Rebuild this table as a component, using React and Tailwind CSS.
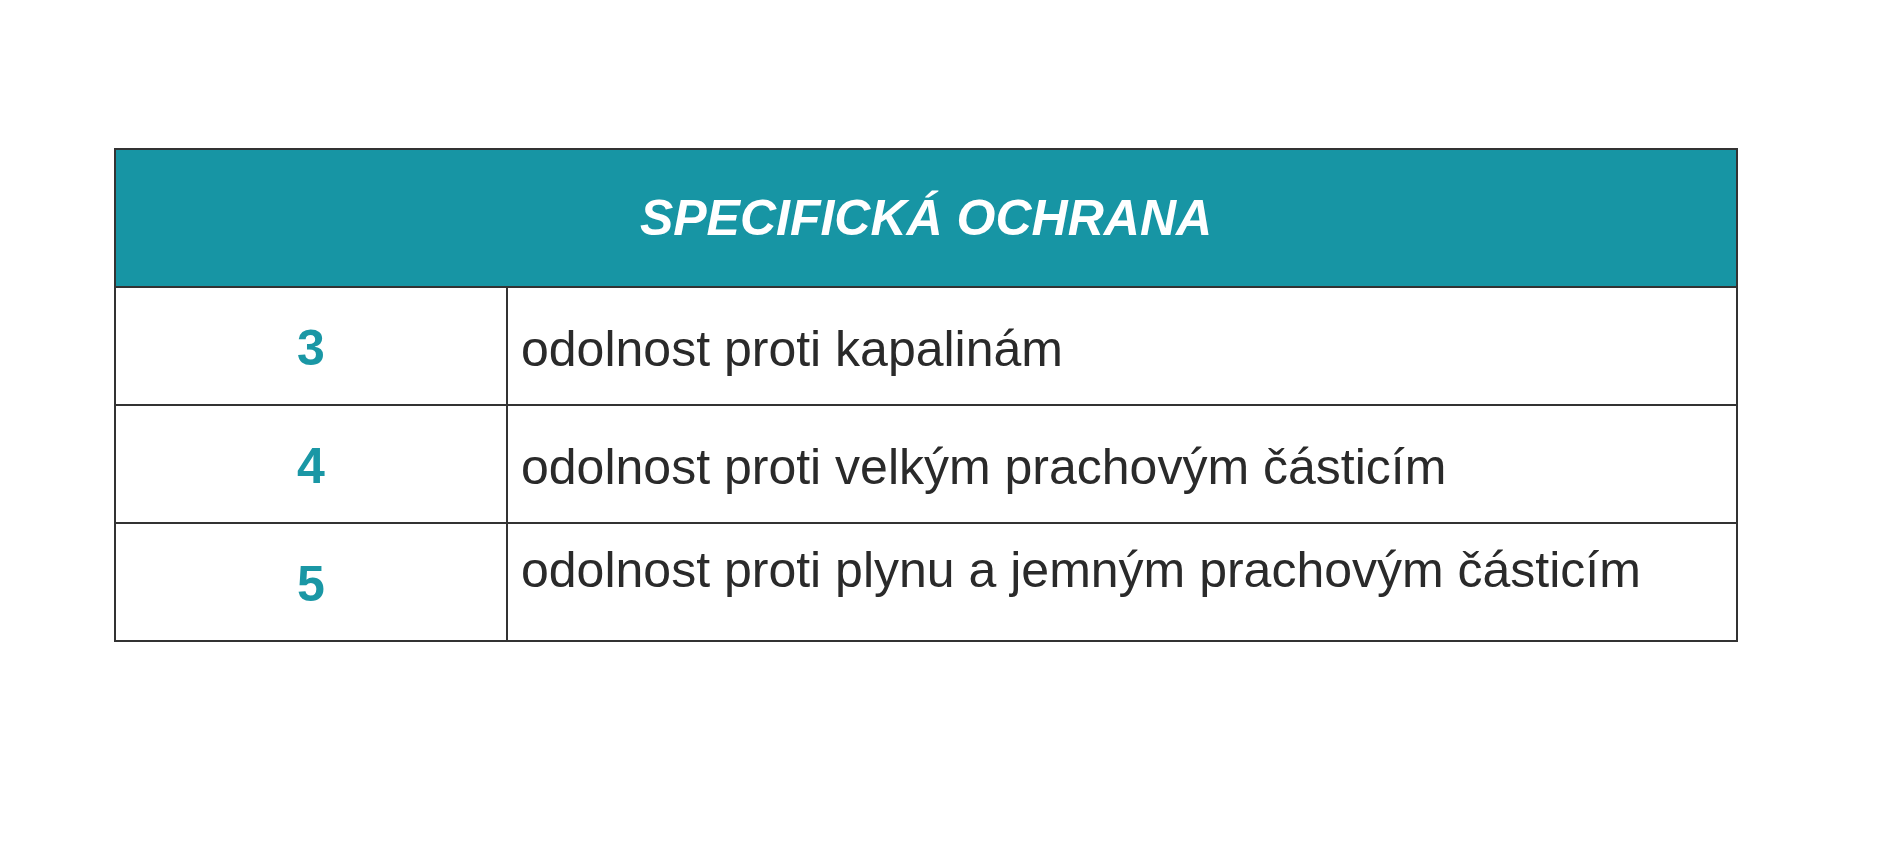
import React from "react";

const rows = [
  { num: "3", text: "odolnost proti kapalinám", align: "center" },
  { num: "4", text: "odolnost proti velkým prachovým částicím", align: "center" },
  { num: "5", text: "odolnost proti plynu a jemným prachovým částicím", align: "top" },
];

export default function App() {
  return (
    <div
      className="min-h-screen w-full bg-white pt-[148px] pl-[114px]"
      style={{ fontFamily: '"Liberation Sans", Arial, sans-serif' }}
    >
      <div className="w-[1624px] border-2 border-[#333333]">
        <div className="flex h-[138px] items-center justify-center border-b-2 border-[#333333] bg-[#1795a4]">
          <h2 className="text-[50px] font-bold italic leading-[58px] text-white">
            SPECIFICKÁ OCHRANA
          </h2>
        </div>

        {rows.map((row, i) => (
          <div
            key={row.num}
            className={
              i < rows.length - 1
                ? "grid h-[118px] grid-cols-[392px_1fr] border-b-2 border-[#333333]"
                : "grid h-[116px] grid-cols-[392px_1fr]"
            }
          >
            <div className="flex items-center justify-center border-r-2 border-[#333333] pt-[4px]">
              <span className="text-[50px] font-bold leading-[58px] text-[#1a97a5]">
                {row.num}
              </span>
            </div>
            <div
              className={
                row.align === "center"
                  ? "flex items-center pl-[13px] pt-[6px]"
                  : "flex items-start pl-[13px] pt-[17px]"
              }
            >
              <span className="text-[50px] leading-[58px] text-[#2a2a2a]">
                {row.text}
              </span>
            </div>
          </div>
        ))}
      </div>
    </div>
  );
}
